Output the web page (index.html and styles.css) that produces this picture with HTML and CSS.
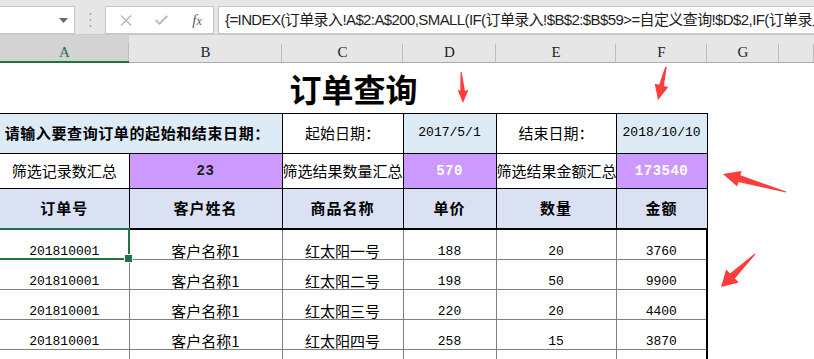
FILE: index.html
```html
<!DOCTYPE html>
<html lang="zh">
<head>
<meta charset="utf-8">
<title>订单查询</title>
<link rel="stylesheet" href="styles.css">
</head>
<body>
<div class="app">
  <div class="fbar">
    <div class="namebox">
      <svg class="dd" width="9" height="5" viewBox="0 0 9 5"><polygon points="0,0 9,0 4.5,5" fill="#6a6a6a"/></svg>
    </div>
    <div class="grip">
      <svg width="3" height="14" viewBox="0 0 3 14"><rect x="0.5" y="0" width="2" height="2" fill="#b4b4b4"/><rect x="0.5" y="6" width="2" height="2" fill="#b4b4b4"/><rect x="0.5" y="12" width="2" height="2" fill="#b4b4b4"/></svg>
    </div>
    <div class="fxbox">
      <span class="ico">
        <svg width="12" height="11" viewBox="0 0 12 11"><path d="M1 0.5 L11 10.5 M11 0.5 L1 10.5" stroke="#b5b5b5" stroke-width="1.4" fill="none"/></svg>
      </span>
      <span class="ico ico2">
        <svg width="13" height="10" viewBox="0 0 13 10"><path d="M0.8 5 L4.5 8.8 L12.3 0.8" stroke="#b5b5b5" stroke-width="1.8" fill="none"/></svg>
      </span>
      <span class="ico ico3"><span class="fx">f<span class="fxx">x</span></span></span>
    </div>
    <div class="formula">{=INDEX(订单录入!A$2:A$200,SMALL(IF(订单录入!$B$2:$B$59&gt;=自定义查询!$D$2,IF(订单录入</div>
  </div>

  <div class="colhdr">
    <div class="ch ch-a sel-col">A</div>
    <div class="ch ch-b">B</div>
    <div class="ch ch-c">C</div>
    <div class="ch ch-d">D</div>
    <div class="ch ch-e">E</div>
    <div class="ch ch-f">F</div>
    <div class="ch ch-g">G</div>
    <div class="ch ch-h"></div>
  </div>

  <table class="sheet">
    <colgroup>
      <col class="w-a"><col class="w-b"><col class="w-c"><col class="w-d"><col class="w-e"><col class="w-f"><col class="w-g"><col class="w-h">
    </colgroup>
    <tr class="r-title">
      <td class="title" colspan="6">订单查询</td>
      <td></td><td></td>
    </tr>
    <tr class="r-date">
      <td class="bk first blue prompt" colspan="2">请输入要查询订单的起始和结束日期：</td>
      <td class="bk">起始日期：</td>
      <td class="bk blue num">2017/5/1</td>
      <td class="bk">结束日期：</td>
      <td class="bk blue num">2018/10/10</td>
      <td></td><td></td>
    </tr>
    <tr class="r-sum">
      <td class="bk first">筛选记录数汇总</td>
      <td class="bk purple num bnum">23</td>
      <td class="bk clip">筛选结果数量汇总</td>
      <td class="bk purple num bnum wnum">570</td>
      <td class="bk clip">筛选结果金额汇总</td>
      <td class="bk purple num bnum wnum">173540</td>
      <td></td><td></td>
    </tr>
    <tr class="r-head">
      <td class="bk first hd">订单号</td>
      <td class="bk hd">客户姓名</td>
      <td class="bk hd">商品名称</td>
      <td class="bk hd">单价</td>
      <td class="bk hd">数量</td>
      <td class="bk hd">金额</td>
      <td></td><td></td>
    </tr>
    <tr class="r-data">
      <td class="d first num sel">201810001</td>
      <td class="d">客户名称1</td>
      <td class="d">红太阳一号</td>
      <td class="d num">188</td>
      <td class="d num">20</td>
      <td class="d num last">3760</td>
      <td></td><td></td>
    </tr>
    <tr class="r-data">
      <td class="d first num">201810001</td>
      <td class="d">客户名称1</td>
      <td class="d">红太阳二号</td>
      <td class="d num">198</td>
      <td class="d num">50</td>
      <td class="d num last">9900</td>
      <td></td><td></td>
    </tr>
    <tr class="r-data">
      <td class="d first num">201810001</td>
      <td class="d">客户名称1</td>
      <td class="d">红太阳三号</td>
      <td class="d num">220</td>
      <td class="d num">20</td>
      <td class="d num last">4400</td>
      <td></td><td></td>
    </tr>
    <tr class="r-data">
      <td class="d first num">201810001</td>
      <td class="d">客户名称1</td>
      <td class="d">红太阳四号</td>
      <td class="d num">258</td>
      <td class="d num">15</td>
      <td class="d num last">3870</td>
      <td></td><td></td>
    </tr>
    <tr class="r-data">
      <td class="d first num"></td>
      <td class="d"></td>
      <td class="d"></td>
      <td class="d num"></td>
      <td class="d num"></td>
      <td class="d num last"></td>
      <td></td><td></td>
    </tr>
  </table>

  <svg class="arrows" width="814" height="359" viewBox="0 0 814 359">
    <polygon fill="#fb3c3c" points="460.5,72 461.6,72 465,91 468.5,89.5 463,103 457.5,89.5 460.3,91"/>
    <polygon fill="#fb3c3c" points="665.3,66.8 666.7,67.2 663.9,86 668.3,87 658,100 654.7,83.8 659.1,84.8"/>
    <polygon fill="#fb3c3c" points="723,174 741.6,171 740.4,175.3 786.1,191.5 785.9,192.5 738.4,182.1 737.2,186.4"/>
    <polygon fill="#fb3c3c" points="721,287 726.2,269.4 730.1,273.4 754.7,253.6 755.3,254.4 734.9,278.4 738.8,282.4"/>
  </svg>
</div>
</body>
</html>
```

FILE: styles.css
```css
* { box-sizing: border-box; }

html, body {
  margin: 0;
  padding: 0;
  background: #ffffff;
}

body {
  width: 814px;
  height: 359px;
  overflow: hidden;
  font-family: "Noto Sans CJK SC", sans-serif;
  color: #000;
}

.app {
  position: relative;
  width: 814px;
  height: 359px;
  overflow: hidden;
}

/* ---------- formula bar ---------- */
.fbar {
  height: 34px;
  padding-top: 6px;
  background: #e6e6e6;
  display: flex;
  align-items: stretch;
}

.namebox {
  width: 75px;
  height: 28px;
  background: #fff;
  border: 1px solid #c6c6c6;
  border-left: 0;
  display: flex;
  justify-content: flex-end;
  align-items: center;
  padding-right: 6px;
}

.dd { display: block; margin-top: 1px; }

.grip {
  width: 30px;
  display: flex;
  justify-content: center;
  align-items: center;
}
.grip svg { display: block; }

.fxbox {
  width: 109px;
  height: 28px;
  background: #fff;
  border: 1px solid #c6c6c6;
  display: flex;
  align-items: center;
  padding-left: 13px;
}

.ico {
  width: 14px;
  display: flex;
  justify-content: center;
  align-items: center;
}
.ico svg { display: block; }
.ico2 { margin-left: 21px; }
.ico3 { margin-left: 22px; }

.fx {
  font-family: "Liberation Serif", serif;
  font-style: italic;
  font-size: 15px;
  color: #5a5a5a;
  line-height: 1;
}
.fxx { font-size: 12px; }

.formula {
  flex: 1;
  height: 28px;
  margin-left: 4px;
  background: #fff;
  border: 1px solid #c6c6c6;
  border-right: 0;
  padding-left: 6px;
  font-family: "Liberation Sans", "Noto Sans CJK SC", sans-serif;
  font-size: 15px;
  letter-spacing: -0.6px;
  line-height: 26px;
  color: #1e1e1e;
  white-space: nowrap;
  overflow: hidden;
}

/* ---------- column headers ---------- */
.colhdr {
  display: flex;
  height: 29px;
  border-top: 1px solid #c9c9c9;
  background: #e6e6e6;
}

.ch {
  height: 28px;
  display: flex;
  justify-content: center;
  align-items: flex-end;
  padding-bottom: 2px;
  font-family: "Liberation Serif", serif;
  font-size: 15px;
  line-height: 16px;
  color: #222;
  border-bottom: 1px solid #ababab;
  background: linear-gradient(#bdbdbd, #bdbdbd) right bottom / 1px 18px no-repeat;
}

.sel-col {
  background-color: #d3d3d3;
  color: #217346;
  border-bottom: 2px solid #217346;
  padding-bottom: 1px;
}

.ch-a { width: 129px; }
.ch-b { width: 153px; }
.ch-c { width: 121px; }
.ch-d { width: 93px; }
.ch-e { width: 120px; }
.ch-f { width: 91px; }
.ch-g { width: 72px; }
.ch-h { flex: 1; }

/* ---------- sheet ---------- */
.sheet {
  border-collapse: collapse;
  table-layout: fixed;
  width: 814px;
}

.w-a { width: 129px; }
.w-b { width: 153px; }
.w-c { width: 121px; }
.w-d { width: 93px; }
.w-e { width: 120px; }
.w-f { width: 91px; }
.w-g { width: 72px; }
.w-h { width: 35px; }

.sheet td {
  padding: 0 1px;
  text-align: center;
  vertical-align: middle;
  white-space: nowrap;
  overflow: hidden;
  font-size: 15px;
  line-height: 18px;
}

.r-title { height: 50px; }
.r-date { height: 40px; }
.r-sum { height: 35px; }
.r-head { height: 41px; }
.r-data { height: 30px; }

.title {
  font-size: 32px !important;
  font-weight: 700;
  line-height: 40px !important;
  padding-top: 1px !important;
}

.bk { border: 1px solid #000; }
.first { border-left: 0 !important; }

.blue { background: #ddebf7; }
.purple { background: #cc99ff; }

.prompt {
  font-weight: 700;
  letter-spacing: 0.6px;
  text-align: center;
  padding-right: 8px !important;
}

.clip {
  text-align: left !important;
  padding: 0 !important;
}

.num {
  font-family: "Liberation Mono", monospace;
  font-size: 13px !important;
}

.bnum {
  font-weight: 700;
  font-size: 14px !important;
  letter-spacing: 0.5px;
  color: #1a1a1a;
}
.wnum { color: #ffffff; }

.hd {
  background: #d9e1f2;
  font-weight: 700;
  letter-spacing: 1px;
  border-bottom: 2px solid #000 !important;
}

.d {
  border: 1px solid #808080;
  vertical-align: bottom !important;
  padding-bottom: 0 !important;
  line-height: 16px !important;
}
.d.num { line-height: 15px !important; }
.d.last { border-right: 2px solid #000; }

/* active cell */
.sel { position: relative; overflow: visible !important; }
.sel::after {
  content: "";
  position: absolute;
  left: -2px;
  top: -2px;
  right: -1px;
  bottom: -1px;
  border: 2px solid #217346;
  border-left: 0;
}
.sel::before {
  content: "";
  position: absolute;
  right: -4px;
  bottom: -4px;
  width: 7px;
  height: 7px;
  background: #217346;
  border: 1px solid #fff;
  z-index: 2;
}

/* annotation arrows drawn over the sheet */
.arrows {
  position: absolute;
  left: 0;
  top: 0;
  pointer-events: none;
}
```
